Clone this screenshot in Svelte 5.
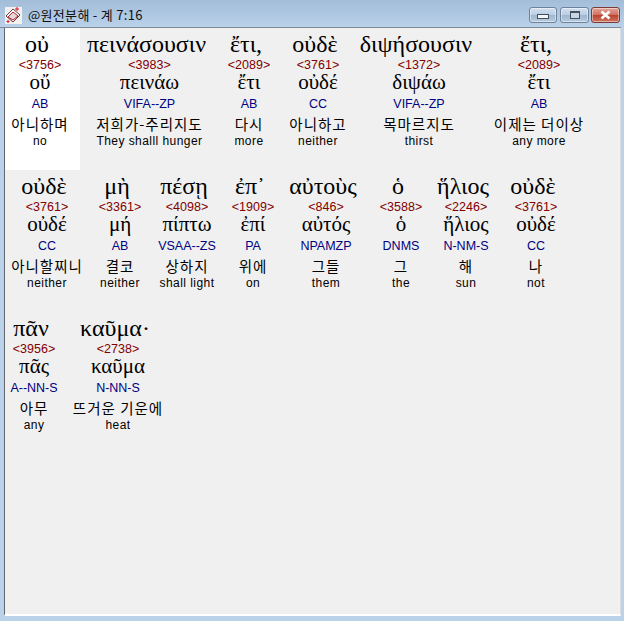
<script>
  // w = cell width, so the columns line up with the reference window
  const rows = [
    [
      { w: 75, gr: 'οὐ ', num: '<3756>', lemma: 'οὔ', code: 'AB', ko: '아니하며', en: 'no', selected: true },
      { w: 144, gr: 'πεινάσουσιν ', num: '<3983>', lemma: 'πεινάω', code: 'VIFA--ZP', ko: '저희가-주리지도', en: 'They shalll hunger' },
      { w: 55, gr: 'ἔτι, ', num: '<2089>', lemma: 'ἔτι', code: 'AB', ko: '다시', en: 'more' },
      { w: 83, gr: 'οὐδὲ ', num: '<3761>', lemma: 'οὐδέ', code: 'CC', ko: '아니하고', en: 'neither' },
      { w: 119, gr: 'διψήσουσιν ', num: '<1372>', lemma: 'διψάω', code: 'VIFA--ZP', ko: '목마르지도', en: 'thirst' },
      { w: 121, gr: 'ἔτι, ', num: '<2089>', lemma: 'ἔτι', code: 'AB', ko: '이제는 더이상', en: 'any more' }
    ],
    [
      { w: 89, gr: 'οὐδὲ ', num: '<3761>', lemma: 'οὐδέ', code: 'CC', ko: '아니할찌니', en: 'neither' },
      { w: 57, gr: 'μὴ ', num: '<3361>', lemma: 'μή', code: 'AB', ko: '결코', en: 'neither' },
      { w: 77, gr: 'πέσῃ ', num: '<4098>', lemma: 'πίπτω', code: 'VSAA--ZS', ko: '상하지', en: 'shall light' },
      { w: 55, gr: 'ἐπ᾽ ', num: '<1909>', lemma: 'ἐπί', code: 'PA', ko: '위에', en: 'on' },
      { w: 91, gr: 'αὐτοὺς ', num: '<846>', lemma: 'αὐτός', code: 'NPAMZP', ko: '그들', en: 'them' },
      { w: 59, gr: 'ὁ ', num: '<3588>', lemma: 'ὁ', code: 'DNMS', ko: '그', en: 'the' },
      { w: 71, gr: 'ἥλιος ', num: '<2246>', lemma: 'ἥλιος', code: 'N-NM-S', ko: '해', en: 'sun' },
      { w: 69, gr: 'οὐδὲ ', num: '<3761>', lemma: 'οὐδέ', code: 'CC', ko: '나', en: 'not' }
    ],
    [
      { w: 63, gr: 'πᾶν ', num: '<3956>', lemma: 'πᾶς', code: 'A--NN-S', ko: '아무', en: 'any' },
      { w: 105, gr: 'καῦμα· ', num: '<2738>', lemma: 'καῦμα', code: 'N-NN-S', ko: '뜨거운 기운에', en: 'heat' }
    ]
  ];
</script>

<div class="window">
  <header class="titlebar">
    <svg class="app-icon" width="17" height="17" viewBox="0 0 17 17" aria-hidden="true">
      <rect width="17" height="17" fill="#f4f0ee" />
      <path d="M1 9 L8 2 L15 8 L8 15 Z" fill="#fff" stroke="#6a3a3a" stroke-width="1" />
      <path d="M3 10 L8 5 L13 9 L8 13 Z" fill="#e8d8d8" stroke="#b02030" stroke-width="1" />
      <path d="M12 0 L12 4 M10 2 L14 2 M3 13 L3 16 M1.500 14.500 L4.500 14.500" stroke="#d81830" stroke-width="1" />
    </svg>
    <span class="title">@원전분해 - 계 7:16</span>
    <div class="controls">
      <button class="ctl" aria-label="Minimize"><span class="min-glyph"></span></button>
      <button class="ctl max" aria-label="Maximize"><span class="max-glyph"></span></button>
      <button class="ctl close" aria-label="Close">
        <svg width="13" height="10" viewBox="0 0 13 10" aria-hidden="true">
          <path d="M2.500 1.500 L10.500 8.500 M10.500 1.500 L2.500 8.500" stroke="#fff" stroke-width="2.600" />
        </svg>
      </button>
    </div>
  </header>

  <main class="client">
    {#each rows as row}
      <div class="row">
        {#each row as word}
          <div class="word" class:selected={word.selected} style:width="{word.w}px">
            <div class="gr">{word.gr}</div>
            <div class="num">{word.num}</div>
            <div class="lemma">{word.lemma}</div>
            <div class="code">{word.code}</div>
            <div class="ko">{word.ko}</div>
            <div class="en">{word.en}</div>
          </div>
        {/each}
      </div>
    {/each}
  </main>
</div>

<style>
  :global(body) {
    margin: 0;
  }

  .window {
    width: 624px;
    height: 621px;
    box-sizing: border-box;
    padding: 0 3px 5px 4px;
    display: flex;
    flex-direction: column;
    overflow: hidden;
    background: linear-gradient(#a3bcd8 0, #bad2ea 28px, #bad2ea 100%);
  }

  .titlebar {
    height: 28px;
    flex: none;
    display: flex;
    align-items: center;
    margin-left: -4px;
    padding-left: 5px;
    border-bottom: 1px solid #7f8a96;
    box-sizing: border-box;
  }

  .app-icon {
    margin-top: 3px;
    flex: none;
  }

  .title {
    margin-left: 6px;
    margin-top: 2px;
    font: 13px "Noto Sans CJK KR", "Liberation Sans", sans-serif;
    letter-spacing: 0.3px;
    color: #111;
    white-space: pre;
  }

  .controls {
    margin-left: auto;
    margin-top: 3px;
    margin-right: 1px;
    display: flex;
    gap: 2px;
  }

  .ctl {
    width: 28px;
    height: 16px;
    padding: 0;
    display: flex;
    align-items: center;
    justify-content: center;
    border: 1px solid #6e8299;
    border-radius: 3px;
    background: linear-gradient(#d4e1ef 0, #b9cde2 50%, #9fb6cf 51%, #b8cce0 100%);
    box-shadow: inset 0 0 0 1px rgba(255, 255, 255, 0.45);
  }

  .ctl.max {
    width: 29px;
    margin-left: 1px;
  }

  .ctl.close {
    width: 29px;
    border-color: #7a3a35;
    background: linear-gradient(#e3a598 0, #d06f5f 50%, #b8412f 51%, #cf7460 100%);
  }

  .min-glyph {
    width: 10px;
    height: 3px;
    margin-top: 3px;
    border: 1px solid #44505e;
    background: #f2f5f8;
  }

  .max-glyph {
    width: 8px;
    height: 5px;
    border: 1px solid #44505e;
    border-top-width: 2px;
    background: #c8d6e4;
  }

  .client {
    flex: 1;
    box-sizing: border-box;
    border-left: 1px solid #63666c;
    border-bottom: 2px solid #fff;
    border-right: 1px solid #dcdcdc;
    background: #f0f0f0;
    overflow: hidden;
  }

  .row {
    display: flex;
    height: 142px;
  }

  .word {
    flex: none;
    box-sizing: border-box;
    height: 142px;
    padding: 0 10px 0 5px;
    text-align: center;
  }

  .word.selected {
    background: #fff;
  }

  /* cells are narrower than some texts' line boxes here, so centre on overflow too */
  .word > div {
    white-space: pre;
    display: flex;
    justify-content: center;
  }

  .gr,
  .lemma {
    font-family: "Liberation Serif", "DejaVu Serif", serif;
    color: #000;
  }

  .gr {
    height: 28px;
    line-height: 32px;
    font-size: 24px;
  }

  .num,
  .code {
    font-family: "Liberation Sans", sans-serif;
    font-size: 12.5px;
  }

  .num {
    height: 18px;
    line-height: 18px;
    color: #800000;
  }

  .lemma {
    height: 20px;
    line-height: 16px;
    font-size: 21px;
  }

  .code {
    height: 20px;
    line-height: 20px;
    color: #000080;
  }

  .ko {
    height: 20px;
    line-height: 20px;
    font-family: "Noto Sans CJK KR", sans-serif;
    font-size: 14.5px;
    letter-spacing: 1px;
    color: #000;
  }

  .en {
    height: 14px;
    line-height: 14px;
    font-family: "Liberation Sans", sans-serif;
    font-size: 12px;
    letter-spacing: 0.45px;
    color: #000;
  }
</style>
